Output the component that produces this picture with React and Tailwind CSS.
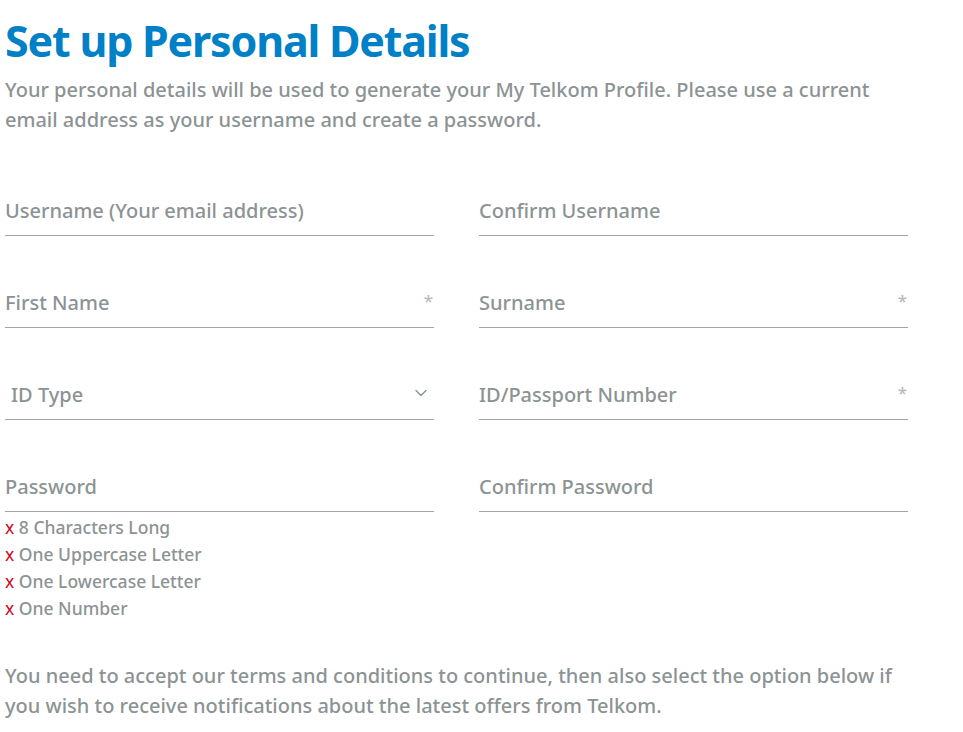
import { ChevronDown } from 'lucide-react'

const FONT = { fontFamily: '"Noto Sans", "Open Sans", sans-serif' }

function Field({ label, required, select, indent }) {
  return (
    <div className="flex h-[50px] items-center border-b border-[#a3a5a6]">
      <span className={`flex-1 text-[20px] font-medium text-[#8c9394] ${indent ? 'pl-[6px]' : ''}`}>{label}</span>
      {required && <span className="mr-[1px] mb-[4px] text-[17px] font-medium text-[#b7bbbc]">*</span>}
      {select && <ChevronDown className="mr-[3px] mb-[4px] h-[20px] w-[20px] text-[#8c9394]" strokeWidth={1.7} />}
    </div>
  )
}

const RULES = ['8 Characters Long', 'One Uppercase Letter', 'One Lowercase Letter', 'One Number']

export default function App() {
  return (
    <div className="min-h-screen bg-white px-[5px] pt-[14px]" style={FONT}>
      <h1 className="text-[43px] font-bold leading-[54px] tracking-[-1.2px] text-[#0080c6]">Set up Personal Details</h1>
      <p className="mt-[7px] w-[900px] text-[20px] font-medium leading-[30px] text-[#8c9394]">
        Your personal details will be used to generate your My Telkom Profile. Please use a current email address as your username and create a password.
      </p>

      <div className="mt-[51px] grid w-[903px] grid-cols-2 gap-x-[45px] gap-y-[42px]">
        <Field label="Username (Your email address)" />
        <Field label="Confirm Username" />
        <Field label="First Name" required />
        <Field label="Surname" required />
        <Field label="ID Type" select indent />
        <Field label="ID/Passport Number" required />
        <div>
          <Field label="Password" />
          <ul className="mt-[2px] text-[17.5px] font-medium leading-[27px] text-[#8c9394]">
            {RULES.map(r => (
              <li key={r}><span className="font-normal text-[#d0021b]">x</span> {r}</li>
            ))}
          </ul>
        </div>
        <div>
          <Field label="Confirm Password" />
        </div>
      </div>

      <p className="mt-[39px] w-[900px] text-[20px] font-medium leading-[30px] text-[#8c9394]">
        You need to accept our terms and conditions to continue, then also select the option below if you wish to receive notifications about the latest offers from Telkom.
      </p>
    </div>
  )
}
